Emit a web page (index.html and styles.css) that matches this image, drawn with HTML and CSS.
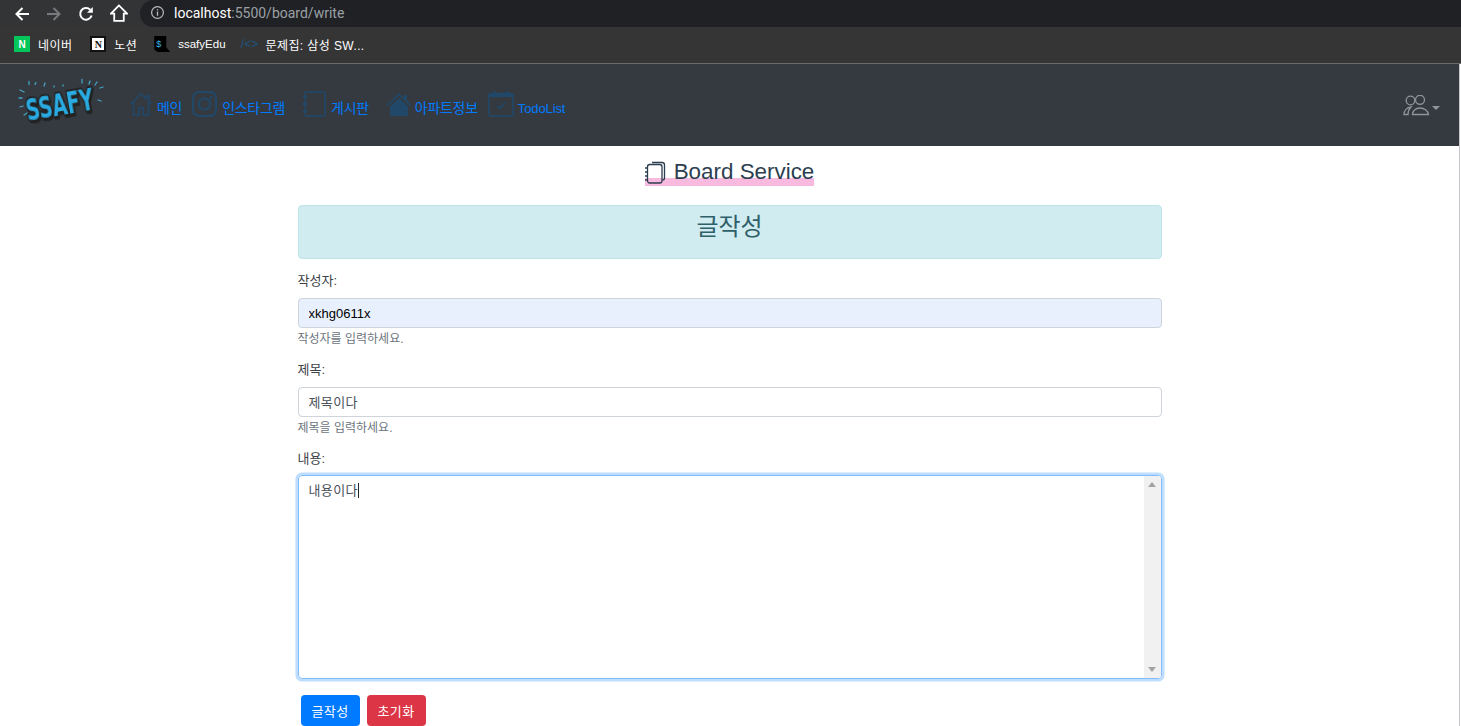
FILE: index.html
```html
<!DOCTYPE html>
<html lang="ko">
<head>
<meta charset="utf-8">
<title>Board</title>
<link rel="stylesheet" href="styles.css">
</head>
<body>
<div class="chrome">
  <div class="toolbar">
    <svg class="tb-icon" viewBox="0 0 16 16"><path d="M15 8H2.500M8.500 2 2.500 8l6 6" fill="none" stroke="#fff" stroke-width="2"/></svg>
    <svg class="tb-icon" viewBox="0 0 16 16"><path d="M1 8h12.500M7.500 2l6 6-6 6" fill="none" stroke="#77797c" stroke-width="2"/></svg>
    <svg class="tb-icon" viewBox="0 0 16 16"><path d="M13.600 9.400A5.800 5.800 0 1 1 12.200 3.800" fill="none" stroke="#fff" stroke-width="2"/><path d="M14.800 1v5.800H9z" fill="#fff"/></svg>
    <svg class="tb-icon tb-home" viewBox="0 0 17 17"><path d="M8.500 1.400 1 9h3v7h9V9h3z" fill="none" stroke="#fff" stroke-width="1.700"/></svg>
    <div class="omnibox">
      <svg class="info" viewBox="0 0 16 16"><circle cx="8" cy="8" r="6.300" fill="none" stroke="#b8babc" stroke-width="1.300"/><path d="M8 7v4.400M8 4.500v1.400" stroke="#b8babc" stroke-width="1.400"/></svg>
      <span class="host">localhost</span><span class="path">:5500/board/write</span>
    </div>
  </div>
  <div class="bookmarks">
    <a class="bm ko"><span class="fav naver">N</span>네이버</a>
    <a class="bm ko tight"><span class="fav notion">N</span>노션</a>
    <a class="bm en"><span class="fav edu">$</span>ssafyEdu</a>
    <a class="bm ko"><span class="fav code">/&lt;&gt;</span>문제집: 삼성 SW...</a>
  </div>
</div>

<div class="app">
<nav class="navbar">
  <svg class="logo" viewBox="0 0 88 46">
    <g stroke="#45a5c4" stroke-width="1.300" stroke-linecap="round">
      <path d="M11 2.500v3M18 3.500l-1 2M27 4l-1 3M36 7v1M45 6v1M64 0.500v3.500M72 2l-1 3M79 3l-2 3M85 8l-3 1M2 11l4 2M1 19l3 0M2 28l3-1M6 36l3-2M83 22l-3 -1"/>
    </g>
    <text class="logo-text" x="10" y="42" transform="rotate(-10 10 42)" textLength="68" lengthAdjust="spacingAndGlyphs">SSAFY</text>
  </svg>
  <ul class="menu">
    <li><a class="nav-link">
      <svg class="ni ni-home" viewBox="0 0 22 24"><path d="M.7 12.500 11 1.800l5 5V4h3v6l2.400 2.500M3.500 10V23h5.500V15.500h4V23h5.500V10" fill="none" stroke="#214869" stroke-width="1.600"/></svg>메인</a></li>
    <li><a class="nav-link">
      <svg class="ni ni-insta" viewBox="0 0 25 26"><rect x="1" y="1" width="23" height="24" rx="6" fill="none" stroke="#214869" stroke-width="2"/><circle cx="12.500" cy="13" r="5.600" fill="none" stroke="#214869" stroke-width="2"/><circle cx="19" cy="6.500" r="1.500" fill="#214869"/></svg>인스타그램</a></li>
    <li><a class="nav-link">
      <svg class="ni ni-book" viewBox="0 0 31 26"><rect x="10" y="1" width="20" height="24" rx="2" fill="none" stroke="#214869" stroke-width="1.600"/><path d="M8 6h4M8 13h4M8 20h4" stroke="#214869" stroke-width="2"/></svg>게시판</a></li>
    <li><a class="nav-link">
      <svg class="ni ni-apt" viewBox="0 0 32 26"><path d="M20 2 8 13.500l1.200 1.200L20 4.400l10.800 10.300 1.200-1.200L28 9.700V4h-3v2.800zM11 15.500V25h18v-9.500L20 7z" fill="#214869"/></svg>아파트정보</a></li>
    <li><a class="nav-link">
      <svg class="ni ni-cal" viewBox="0 0 26 26"><rect x="1" y="2.500" width="24" height="22.500" rx="2" fill="none" stroke="#214869" stroke-width="1.600"/><path d="M1 2.500h24v3.400H1zM6 0h2v3H6zM18 0h2v3h-2z" fill="#214869"/><path d="m9 14.500 3 3 5-6" fill="none" stroke="#214869" stroke-width="1.600"/></svg><span class="latin">TodoList</span></a></li>
  </ul>
  <a class="user">
    <svg class="user-icon" viewBox="0 0 27 21"><g fill="none" stroke="#90949a" stroke-width="1.300"><circle cx="7.500" cy="5.500" r="4.300"/><circle cx="17" cy="4.800" r="4.500"/><path d="M1 19.500c0-4 3-7 7-7.500-2 2-3 5-3 7.500z"/><path d="M9.500 19.500c0-4 3.500-6.500 7.500-6.500s8 2.500 8.500 6.500z"/></g></svg>
    <span class="caret"></span>
  </a>
</nav>

<main class="page">
  <h2 class="title">
    <span class="title-mark">
      <svg class="title-icon" viewBox="0 0 21 23"><g fill="none" stroke="#2c3e50" stroke-width="1.300"><path d="M7 1.500h10a2.500 2.500 0 0 1 2.500 2.500v13a2 2 0 0 1-2 2"/><rect x="2.500" y="3.500" width="14.500" height="18.500" rx="2.200"/></g><path d="M0 7h3M0 11h3M0 15h3M0 19h3" stroke="#2c3e50" stroke-width="1.500"/></svg>Board Service</span>
  </h2>
  <form class="form">
    <div class="alert">글작성</div>
    <div class="group">
      <label class="label">작성자:</label>
      <input class="control autofill" type="text" value="xkhg0611x">
      <small class="hint">작성자를 입력하세요.</small>
    </div>
    <div class="group">
      <label class="label">제목:</label>
      <input class="control spaced" type="text" value="제목이다">
      <small class="hint">제목을 입력하세요.</small>
    </div>
    <div class="group last">
      <label class="label">내용:</label>
      <div class="area">
        <div class="area-text">내용이다<span class="cursor"></span></div>
        <div class="scroll"><span class="up"></span><span class="down"></span></div>
      </div>
    </div>
    <div class="actions">
      <button class="btn blue" type="button">글작성</button>
      <button class="btn red" type="button">초기화</button>
    </div>
  </form>
</main>
</div>
</body>
</html>
```
FILE: styles.css
```css
* { box-sizing: border-box; }
html, body { margin: 0; height: 726px; overflow: hidden; }
body {
  background: #fff;
  font-family: "Liberation Sans", "Noto Sans CJK KR", sans-serif;
  color: #212529;
  font-size: 13px;
}
.chrome { height: 64px; background: #353535; border-bottom: 1px solid #6a6a6a; }
.toolbar {
  height: 27px;
  background: #333435;
  display: flex;
  align-items: center;
  padding-left: 14px;
}
.tb-icon { width: 16px; height: 16px; margin-right: 16px; flex: none; }
.tb-home { width: 18px; height: 18px; margin-right: 12px; margin-top: -1px; }
.omnibox {
  flex: 1;
  height: 27px;
  background: #202124;
  border-radius: 14px 0 0 14px;
  display: flex;
  align-items: center;
  padding: 0 0 2px 10px;
  font-family: "Roboto", "Liberation Sans", sans-serif;
  font-size: 14px;
}
.info { width: 15px; height: 15px; margin-right: 9px; }
.host { color: #fff; }
.path { color: #9aa0a6; }
.bookmarks {
  height: 36px;
  display: flex;
  align-items: center;
  padding: 0 0 2px 14px;
  color: #fff;
  font-size: 12px;
}
.bm { display: flex; align-items: center; margin-right: 18px; white-space: nowrap; }
.bm.ko { letter-spacing: 0.4px; }
.bm.tight { margin-right: 17px; }
.bm.en { font-size: 11.500px; margin-right: 16px; }
.fav {
  width: 16px;
  height: 16px;
  margin-right: 8px;
  display: flex;
  align-items: center;
  justify-content: center;
  font-size: 10px;
  font-weight: 700;
  flex: none;
  letter-spacing: 0;
}
.naver { background: #03c75a; color: #fff; }
.notion { background: #fff; color: #111; border: 2px solid #111; font-family: "Liberation Serif", serif; font-size: 10px; }
.edu { background: #000; color: #3fb6e6; font-weight: 400; font-size: 9px; clip-path: polygon(0 0, 75% 0, 75% 70%, 100% 100%, 20% 100%, 0 85%); justify-content: flex-start; padding-left: 2px; }
.code { color: #1b5582; font-weight: 400; font-size: 12px; white-space: nowrap; }

.app { width: 1460px; border-right: 1px solid #c8c8d0; height: 662px; }
.navbar {
  height: 82px;
  background: #343a40;
  display: flex;
  align-items: flex-start;
  padding: 0 19px 0 18px;
}
.logo { width: 88px; height: 46px; margin-top: 15px; flex: none; overflow: visible; }
.logo-text {
  font-family: "DejaVu Sans", sans-serif;
  font-weight: 700;
  font-size: 30px;
  fill: #29abe2;
  stroke: #222;
  stroke-width: 3.500px;
  stroke-linejoin: round;
  paint-order: stroke;
  filter: drop-shadow(1px 2px 0 #222);
}
.menu {
  display: flex;
  gap: 10px;
  list-style: none;
  margin: 0 0 0 24px;
  padding: 0;
  flex: 1;
}
.nav-link {
  display: flex;
  align-items: flex-end;
  color: #007bff;
  font-size: 14px;
  letter-spacing: -0.3px;
  line-height: 17px;
  margin-top: 27px;
}
.ni { height: 26px; margin-right: 5px; flex: none; }
.ni-home { width: 22px; }
.ni-insta { width: 25px; }
.ni-book { width: 31px; }
.ni-apt { width: 32px; margin-right: 4px; }
.ni-cal { width: 26px; margin-right: 4px; }
.latin { font-size: 13px; letter-spacing: -0.1px; }
.user { display: flex; align-items: center; margin-top: 31px; }
.user-icon { width: 27px; height: 21px; }
.caret {
  width: 0;
  height: 0;
  margin-left: 2px;
  margin-top: 4px;
  border-top: 4px solid #90949a;
  border-left: 4px solid transparent;
  border-right: 4px solid transparent;
}

.page { width: 864px; margin: 0 auto; }
.title {
  margin: 0;
  padding-top: 14px;
  height: 59px;
  text-align: center;
  font-size: 22.400px;
  font-weight: 400;
  line-height: 24px;
  color: #2c3e50;
}
.title-mark {
  display: inline-flex;
  align-items: center;
  padding-bottom: 2px;
  background: linear-gradient(to bottom, transparent 18px, #f8bbdf 18px, #f8bbdf 100%);
  height: 26px;
}
.title-icon { width: 21px; height: 23px; margin-right: 8px; }
.alert {
  height: 54px;
  background: #d1ecf1;
  border: 1px solid #bee5eb;
  border-radius: 4px;
  color: #2f6069;
  font-size: 24px;
  line-height: 41px;
  text-align: center;
  margin-bottom: 8px;
}
.group { margin-bottom: 9px; }
.group.last { margin-bottom: 16px; }
.label {
  display: block;
  height: 24px;
  line-height: 28px;
  font-size: 13px;
  color: #3c4247;
  margin-bottom: 7px;
}
.control {
  display: block;
  width: 100%;
  height: 30px;
  padding: 0 10px;
  border: 1px solid #ced4da;
  border-radius: 4px;
  font-family: inherit;
  font-size: 13px;
  color: #495057;
  background: #fff;
  outline: none;
}
.control.spaced { letter-spacing: 0.4px; padding-bottom: 2px; }
.control.autofill { background: #e8f0fe; color: #000; }
.hint {
  display: block;
  font-size: 12px;
  line-height: 23px;
  height: 19px;
  color: #6c757d;
}
.area {
  height: 204px;
  border: 1px solid #80bdff;
  border-radius: 4px;
  box-shadow: 0 0 0 2.600px #bfdeff;
  display: flex;
  margin-top: -1px;
}
.area-text {
  flex: 1;
  padding: 5px 10px;
  font-size: 13px;
  letter-spacing: 0.4px;
  line-height: 19px;
  color: #495057;
}
.cursor {
  display: inline-block;
  width: 1px;
  height: 15px;
  background: #222;
  vertical-align: -3px;
}
.scroll {
  width: 17px;
  background: #f1f1f1;
  display: flex;
  flex-direction: column;
  justify-content: space-between;
  align-items: center;
  padding: 6px 0;
  border-radius: 0 3px 3px 0;
}
.up { border-bottom: 5px solid #a3a3a3; border-left: 4px solid transparent; border-right: 4px solid transparent; }
.down { border-top: 5px solid #a3a3a3; border-left: 4px solid transparent; border-right: 4px solid transparent; }
.actions { display: flex; gap: 7px; padding-left: 3px; }
.btn {
  width: 59px;
  height: 31px;
  padding: 0;
  border: 0;
  border-radius: 4px;
  color: #fff;
  font-family: inherit;
  font-size: 13px;
  letter-spacing: 0.3px;
}
.blue { background: #007bff; }
.red { background: #dc3545; }
```
